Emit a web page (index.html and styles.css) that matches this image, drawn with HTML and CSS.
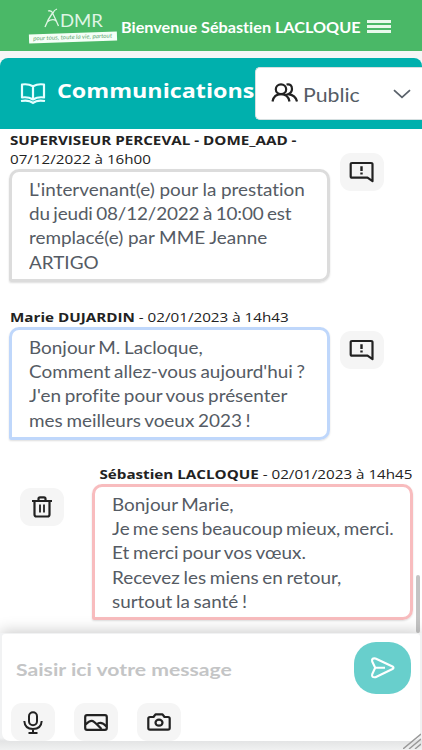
FILE: index.html
```
<!DOCTYPE html>
<html lang="fr">
<head>
<meta charset="utf-8">
<title>Communications</title>
<link rel="stylesheet" href="styles.css">
</head>
<body>
<svg width="0" height="0" class="defs">
  <symbol id="alert" viewBox="0 0 26 22"><path d="M3 2H22Q23.500 2 23.500 3.300V20.200L18.500 16.700H3Q1.700 16.700 1.700 15.400V3.300Q1.700 2 3 2Z" fill="none" stroke="#222" stroke-width="2.200" stroke-linejoin="round"/><path d="M12.500 5.300V10M12.500 11.500V13.600" stroke="#222" stroke-width="2.400"/></symbol>
</svg>
<header class="topbar">
  <div class="logo">
    <div class="brand"><svg viewBox="0 0 16 20" width="16" height="20"><path d="M1 19Q4 11 8.500 5Q12 12 14.500 18M3 14Q9 10 12 13M4 3Q7 2 9 5Q10 2 13 1" fill="none" stroke="currentColor" stroke-width="1.300"/></svg><span>DMR</span></div>
    <div class="slogan"><span>pour tous, toute la vie, partout</span></div>
  </div>
  <span class="welcome"><span>Bienvenue Sébastien LACLOQUE</span></span>
  <div class="menu"><i></i><i></i><i></i></div>
</header>
<section class="titlebar">
  <svg class="book" viewBox="0 0 26 23" width="26" height="23"><g fill="none" stroke="currentColor" stroke-width="2.200" stroke-linejoin="round"><path d="M13 4.200Q8 1.500 2 2.500V15.500Q8 14.500 13 17.500Q18 14.500 24 15.500V2.500Q18 1.500 13 4.200V17"/><path d="M1 19Q9 17.500 13 21Q17 17.500 25 19"/></g></svg>
  <h1><span>Communications</span></h1>
  <div class="select">
    <svg viewBox="0 0 28 20" width="28" height="20" class="people"><g fill="none" stroke="#222" stroke-width="2.200"><ellipse cx="10" cy="6.200" rx="5.200" ry="4.900"/><path d="M1.500 18.500Q3 11.200 10 11.200T18.500 18.500"/><path d="M15.500 1.500Q21 .5 21 6Q21 9.500 17 11.200Q24.500 12 26 18.500"/></g></svg>
    <span class="choice">Public</span>
    <svg viewBox="0 0 18 10" width="18" height="10"><path d="M1 1.200L9 8.400L17 1.200" fill="none" stroke="#5a626b" stroke-width="1.800"/></svg>
  </div>
</section>
<main class="chat">
  <article class="message first">
    <p class="meta"><span><b>SUPERVISEUR PERCEVAL - DOME_AAD -</b></span><span>07/12/2022 à 16h00</span></p>
    <div class="row">
      <div class="bubble grey"><span class="loose">L'intervenant(e) pour la prestation</span><span class="digits">du jeudi 08/12/2022 à 10:00 est</span><span class="loose">remplacé(e) par MME Jeanne</span><span>ARTIGO</span></div>
      <button class="tool raised"><svg width="26" height="22"><use href="#alert"/></svg></button>
    </div>
  </article>
  <article class="message second">
    <p class="meta"><span><b>Marie DUJARDIN</b> - 02/01/2023 à 14h43</span></p>
    <div class="row">
      <div class="bubble blue"><span>Bonjour M. Lacloque,</span><span>Comment allez-vous aujourd'hui ?</span><span>J'en profite pour vous présenter</span><span>mes meilleurs voeux 2023 !</span></div>
      <button class="tool lower"><svg width="26" height="22"><use href="#alert"/></svg></button>
    </div>
  </article>
  <article class="message own">
    <p class="meta"><span><b>Sébastien LACLOQUE</b> - 02/01/2023 à 14h45</span></p>
    <div class="row">
      <button class="tool trash"><svg viewBox="0 0 22 22" width="22" height="22"><g fill="none" stroke="#222" stroke-width="2.200"><path d="M1 5H21M7.500 4.500V2.800Q7.500 1.300 9 1.300H13Q14.500 1.300 14.500 2.800V4.500M3.500 5V18.500Q3.500 20.500 5.500 20.500H16.500Q18.500 20.500 18.500 18.500V5"/><path d="M9 8.500V16.500M13 8.500V16.500" stroke-width="1.800"/></g></svg></button>
      <div class="bubble pink"><span>Bonjour Marie,</span><span class="tight">Je me sens beaucoup mieux, merci.</span><span>Et merci pour vos vœux.</span><span>Recevez les miens en retour,</span><span>surtout la santé !</span></div>
    </div>
  </article>
  <div class="thumb"></div>
</main>
<footer class="dock">
  <div class="composer">
    <div class="entry">
      <span class="placeholder">Saisir ici votre message</span>
      <button class="send"><svg viewBox="0 0 26 24" width="26" height="24"><path d="M5.500 2.500L22.500 10.500Q24.500 11.800 22.500 13L5.500 21.200Q1.300 21.800 2.200 18.200L5.200 11.800L2.200 5.500Q1.300 1.800 5.500 2.500ZM5.200 11.800H15" fill="none" stroke="currentColor" stroke-width="2.100" stroke-linejoin="round"/></svg></button>
    </div>
    <div class="tools">
      <button class="tool"><svg viewBox="0 0 20 23" width="20" height="23"><g fill="none" stroke="#222" stroke-width="2"><rect x="6" y="1.300" width="8" height="13" rx="4"/><path d="M1.300 10Q1.800 18 10 18T18.700 10M10 18V22M5.500 22H14.500"/></g></svg></button>
      <button class="tool"><svg viewBox="0 0 24 17" width="24" height="17"><g fill="none" stroke="#222" stroke-width="2.200"><rect x="1.200" y="1.200" width="21.600" height="14.600" rx="1.800"/><path d="M1.500 10.500Q5.500 6.500 8 6.800Q10 7 17.500 15M12.500 10.500Q17 6.500 22.500 12.500"/></g></svg></button>
      <button class="tool"><svg viewBox="0 0 24 18" width="24" height="18"><g fill="none" stroke="#222" stroke-width="2.200"><path d="M3 4H6.500L8.500 1.300H15.500L17.500 4H21Q22.700 4 22.700 5.600V15Q22.700 16.700 21 16.700H3Q1.300 16.700 1.300 15V5.600Q1.300 4 3 4Z" stroke-linejoin="round"/><ellipse cx="12" cy="9.700" rx="3.500" ry="3"/></g></svg></button>
    </div>
  </div>
  <svg class="grip" viewBox="0 0 18 16" width="18" height="16"><path d="M0 16L18 1M6 16L18 6M12 16L18 11" stroke="#999" stroke-width="1.400"/></svg>
</footer>
</body>
</html>
```
FILE: styles.css
```
* { box-sizing: border-box; }
body { margin: 0; width: 422px; height: 750px; overflow: hidden; background: #f5f6f6; font-family: Lato, sans-serif; font-variant-ligatures: none; display: flex; flex-direction: column; }
.defs { position: absolute; }
svg { display: block; flex: none; }
button { border: 0; padding: 0; display: flex; align-items: center; justify-content: center; }
.topbar { height: 51px; flex: none; background: #4ab867; color: #fff; display: flex; align-items: center; padding-left: 29px; }
.logo { width: 89px; flex: none; height: 36px; color: #dff5e4; }
.brand { display: flex; padding-left: 15px; height: 22px; font-size: 18px; line-height: 24px; }
.brand span { transform: scaleX(1.03); transform-origin: left; }
.slogan { height: 9px; margin-top: 3px; width: 88px; background: #f5fff7; color: #65a875; transform: rotate(-2deg); font-style: italic; font-size: 6px; line-height: 8px; text-align: center; white-space: nowrap; }
.slogan span { display: inline-block; transform: scaleX(1.05); }
.welcome { width: 246px; flex: none; padding-left: 3px; font-weight: bold; font-size: 15px; line-height: 20px; white-space: nowrap; margin-top: 2px; }
.welcome span { display: inline-block; transform: scaleX(1.08); transform-origin: left; }
.menu { width: 24px; margin-left: 3px; margin-top: 2px; display: grid; gap: 2.500px; }
.menu i { height: 2.500px; background: #e8f9ec; }
.titlebar { height: 71px; flex: none; margin-top: 7px; background: #00b0ad; border-radius: 8px 8px 0 0; color: #fff; display: flex; align-items: center; }
.book { margin-left: 20px; color: #e5ffff; }
h1 { margin: -6px 0 0 11px; width: 198px; flex: none; font: bold 20px/28px "Open Sans", sans-serif; white-space: nowrap; }
h1 span { display: inline-block; transform: scaleX(1.165); transform-origin: left; }
.select { flex: 1; min-width: 0; height: 53px; border: 1px solid #d5dfe0; border-right: 0; border-radius: 5px 0 0 5px; background: #fff; display: flex; align-items: center; padding-left: 15px; }
.people { margin-top: -2px; }
.choice { width: 90px; flex: none; margin-left: 4px; padding-top: 2px; color: #555d66; font-size: 19px; transform: scaleX(1.12); transform-origin: left; }
.chat { height: 504px; flex: none; position: relative; background: #fff; padding: 2px 10px 0 9px; }
.meta { margin: 0; padding-left: 1px; font: 12.300px/19px "Open Sans", sans-serif; color: #222; display: flex; flex-direction: column; align-items: flex-start; }
.meta span { white-space: nowrap; transform: scaleX(1.235); transform-origin: left; }
.row { display: flex; gap: 10px; align-items: flex-start; }
.bubble { width: 321px; flex: none; border: 3px solid; border-radius: 10px; border-bottom-left-radius: 2px; padding: 5.500px 0 0 16.500px; color: #555b64; font-size: 17.500px; line-height: 24.400px; box-shadow: 0 1px 2px #0002; }
.bubble span { display: block; white-space: nowrap; word-spacing: -1.050px; transform: scaleX(1.08); transform-origin: left; }
.bubble .digits { letter-spacing: -.150px; }
.bubble .loose { word-spacing: -.200px; }
.bubble .tight { word-spacing: -1.500px; }
.grey { border-color: #dcdcdc; height: 113px; }
.blue { border-color: #bfd7fb; height: 113px; }
.pink { border-color: #f8bcbe; height: 136px; }
.first { height: 177px; }
.second { height: 157px; }
.own .meta { align-items: flex-end; }
.own .meta span { transform-origin: right; }
.own .row { gap: 28px; padding-left: 11px; }
.tool { width: 44px; height: 38px; flex: none; background: #f5f5f5; border-radius: 11px; }
.raised { margin-top: -16px; }
.lower { margin-top: 4px; }
.trash { margin-top: 4px; }
.thumb { position: absolute; left: 416px; top: 446px; width: 4px; height: 58px; background: #c4c4c4; border-radius: 2px; }
.dock { position: relative; flex: 1; padding: 1px 2px 8px; background: linear-gradient(#f1f2f3 105px, #e3e4e5 108px, #f0f1f1); box-shadow: 0 -2px 14px #0003; }
.composer { height: 107px; background: #fff; border-radius: 3px 3px 8px 8px; padding: 8px 9px 0; display: flex; flex-direction: column; justify-content: space-between; }
.entry { display: flex; justify-content: space-between; padding-left: 5px; }
.placeholder { color: #c4c5c6; font-weight: bold; font-size: 17.500px; line-height: 56px; transform: scaleX(1.21); transform-origin: left; }
.send { width: 57px; height: 52px; background: #68cfcc; color: #fff; border-radius: 22px; }
.tools { display: flex; gap: 19px; }
.grip { position: absolute; right: 1px; bottom: 1px; }
```
